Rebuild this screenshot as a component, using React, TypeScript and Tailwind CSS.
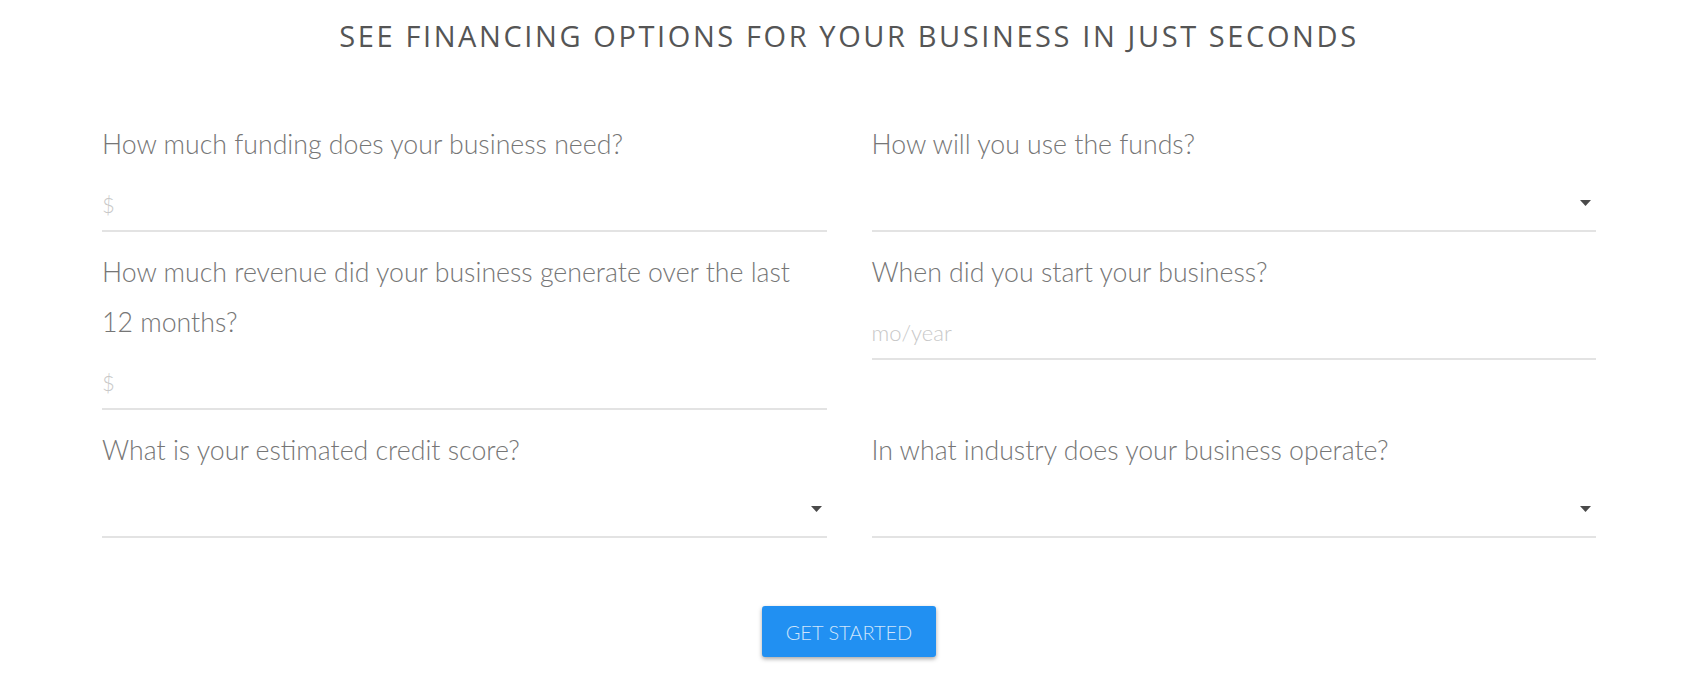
import React from "react";

function Caret() {
  return (
    <svg width="11" height="6" viewBox="0 0 11 6" className="shrink-0">
      <path d="M0 0 L11 0 L5.5 6 Z" fill="#4a4a4a" />
    </svg>
  );
}

function Field({
  label,
  placeholder,
  select,
}: {
  label: React.ReactNode;
  placeholder?: string;
  select?: boolean;
}) {
  return (
    <div className="flex flex-col">
      <div className="text-[26.7px] leading-[50px] text-[#767676] font-light">{label}</div>
      <div className="h-[63px] flex items-center justify-between border-b-2 border-[#e3e3e3] pt-[10px]">
        <span className="text-[22px] text-[#c8c8c8] font-light">{placeholder ?? ""}</span>
        {select && (
          <span className="mr-[5px] -mt-[4px]">
            <Caret />
          </span>
        )}
      </div>
    </div>
  );
}

export default function App() {
  return (
    <div
      className="w-[1705px] h-[700px] bg-white overflow-hidden"
      style={{ fontFamily: "Lato, 'Open Sans', sans-serif" }}
    >
      <div className="ml-[102px] w-[1494px] flex flex-col">
        <h1
          className="text-center text-[29px] leading-[36px] pt-[18px] text-[#555] font-normal tracking-[2.6px]"
          style={{ fontFamily: "'Open Sans', 'DejaVu Sans', sans-serif" }}
        >
          SEE FINANCING OPTIONS FOR YOUR BUSINESS IN JUST SECONDS
        </h1>
        <div className="grid grid-cols-2 gap-x-[45px] gap-y-[15px] mt-[65px] items-start">
          <Field label="How much funding does your business need?" placeholder="$" />
          <Field label="How will you use the funds?" select />
          <Field
            label={
              <>
                How much revenue did your business generate over the last
                <br />
                12 months?
              </>
            }
            placeholder="$"
          />
          <Field label="When did you start your business?" placeholder="mo/year" />
          <Field label="What is your estimated credit score?" select />
          <Field label="In what industry does your business operate?" select />
        </div>
        <div className="flex justify-center mt-[68px]">
          <button className="w-[174px] h-[51px] rounded-[3px] bg-[#2190f2] text-[#cfe5fb] text-[20px] font-light uppercase shadow-[0_2px_4px_rgba(0,0,0,0.35)]">
            Get Started
          </button>
        </div>
      </div>
    </div>
  );
}
